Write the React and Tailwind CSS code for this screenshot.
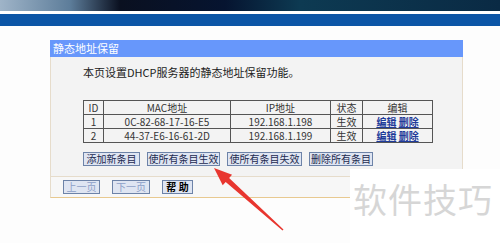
const rows = [
  { id: 1, mac: "0C-82-68-17-16-E5", ip: "192.168.1.198", state: "生效" },
  { id: 2, mac: "44-37-E6-16-61-2D", ip: "192.168.1.199", state: "生效" },
];

function Btn({ w, children, disabled, bold }) {
  return (
    <button
      className={`h-[14px] ${w} whitespace-nowrap border border-[#6d83a8] bg-[#dfe5f2] text-[10px] leading-[12px] ${
        disabled ? "text-[#8da0c8]" : "text-[#1c2a50]"
      } ${bold ? "font-bold text-black" : ""}`}
    >
      {children}
    </button>
  );
}

export default function App() {
  const font = { fontFamily: '"Noto Sans CJK SC", "Liberation Sans", sans-serif' };
  return (
    <div className="relative w-[500px] h-[243px] overflow-hidden bg-[#fdfdfd]" style={font}>
      {/* header banner */}
      <div className="h-[11px] bg-[linear-gradient(90deg,#9fb4c8_0%,#5d7d9a_14%,#0a1020_24%,#061430_45%,#0d3a52_60%,#0a2a44_100%)]" />
      <div className="h-[3px] bg-white" />
      <div className="h-[12px] bg-[#0b55a6]" />

      {/* panel */}
      <div className="ml-[50px] mt-[14px] w-[413px]">
        <div className="h-[17px] bg-[#6797fb] pl-[3px] text-[11px] leading-[17px] text-white">
          静态地址保留
        </div>
        <div className="border-x border-b border-x-[#e6dccb] border-b-[#e8c990] bg-[#f3f3f3]">
          <p className="pt-[8px] pl-[32px] text-[11px] leading-[14px] text-[#222]">
            本页设置DHCP服务器的静态地址保留功能。
          </p>

          <table className="mt-[21px] ml-[32px] w-[350px] border-collapse text-[10px] leading-[12px] text-[#333]">
            <thead>
              <tr className="h-[14px]">
                <th className="w-[20px] border border-[#555] font-normal">ID</th>
                <th className="w-[127px] border border-[#555] font-normal">MAC地址</th>
                <th className="w-[100px] border border-[#555] font-normal">IP地址</th>
                <th className="w-[32px] border border-[#555] font-normal">状态</th>
                <th className="border border-[#555] font-normal">编辑</th>
              </tr>
            </thead>
            <tbody>
              {rows.map((r) => (
                <tr key={r.id} className="h-[14px]">
                  <td className="border border-[#555] text-center">{r.id}</td>
                  <td className="border border-[#555] text-center">{r.mac}</td>
                  <td className="border border-[#555] text-center">{r.ip}</td>
                  <td className="border border-[#555] text-center">{r.state}</td>
                  <td className="border border-[#555] text-center">
                    <span className="font-bold text-[#1f3b9a] underline">编辑</span>{" "}
                    <span className="font-bold text-[#1f3b9a] underline">删除</span>
                  </td>
                </tr>
              ))}
            </tbody>
          </table>

          <div className="mt-[9px] ml-[32px] flex gap-[7px] pb-[10px]">
            <Btn w="w-[57px]">添加新条目</Btn>
            <Btn w="w-[73px]">使所有条目生效</Btn>
            <Btn w="w-[75px]">使所有条目失效</Btn>
            <Btn w="w-[64px]">删除所有条目</Btn>
          </div>

          <div className="flex gap-[12px] border-t border-[#e6dccb] bg-[#f7f7f7] pt-[3px] pb-[3px] pl-[12px]">
            <Btn w="w-[37px]" disabled>上一页</Btn>
            <Btn w="w-[38px]" disabled>下一页</Btn>
            <Btn w="w-[31px]" bold>帮 助</Btn>
          </div>
        </div>
      </div>

      {/* watermark */}
      <div className="absolute left-[350px] top-[169px] right-0 bottom-0 bg-white">
        <div className="pl-[3px] pt-[10px] text-[34px] leading-[40px] tracking-[1px] text-[#d6d6d6]">
          软件技巧
        </div>
      </div>

      {/* red arrow */}
      <svg className="absolute left-0 top-0" width="500" height="243">
        <polygon
          points="214,168 232.1,174.8 229.1,178.1 283.5,229.4 282.5,230.6 225.7,181.9 222.7,185.2"
          fill="#e8362f"
        />
      </svg>
    </div>
  );
}
